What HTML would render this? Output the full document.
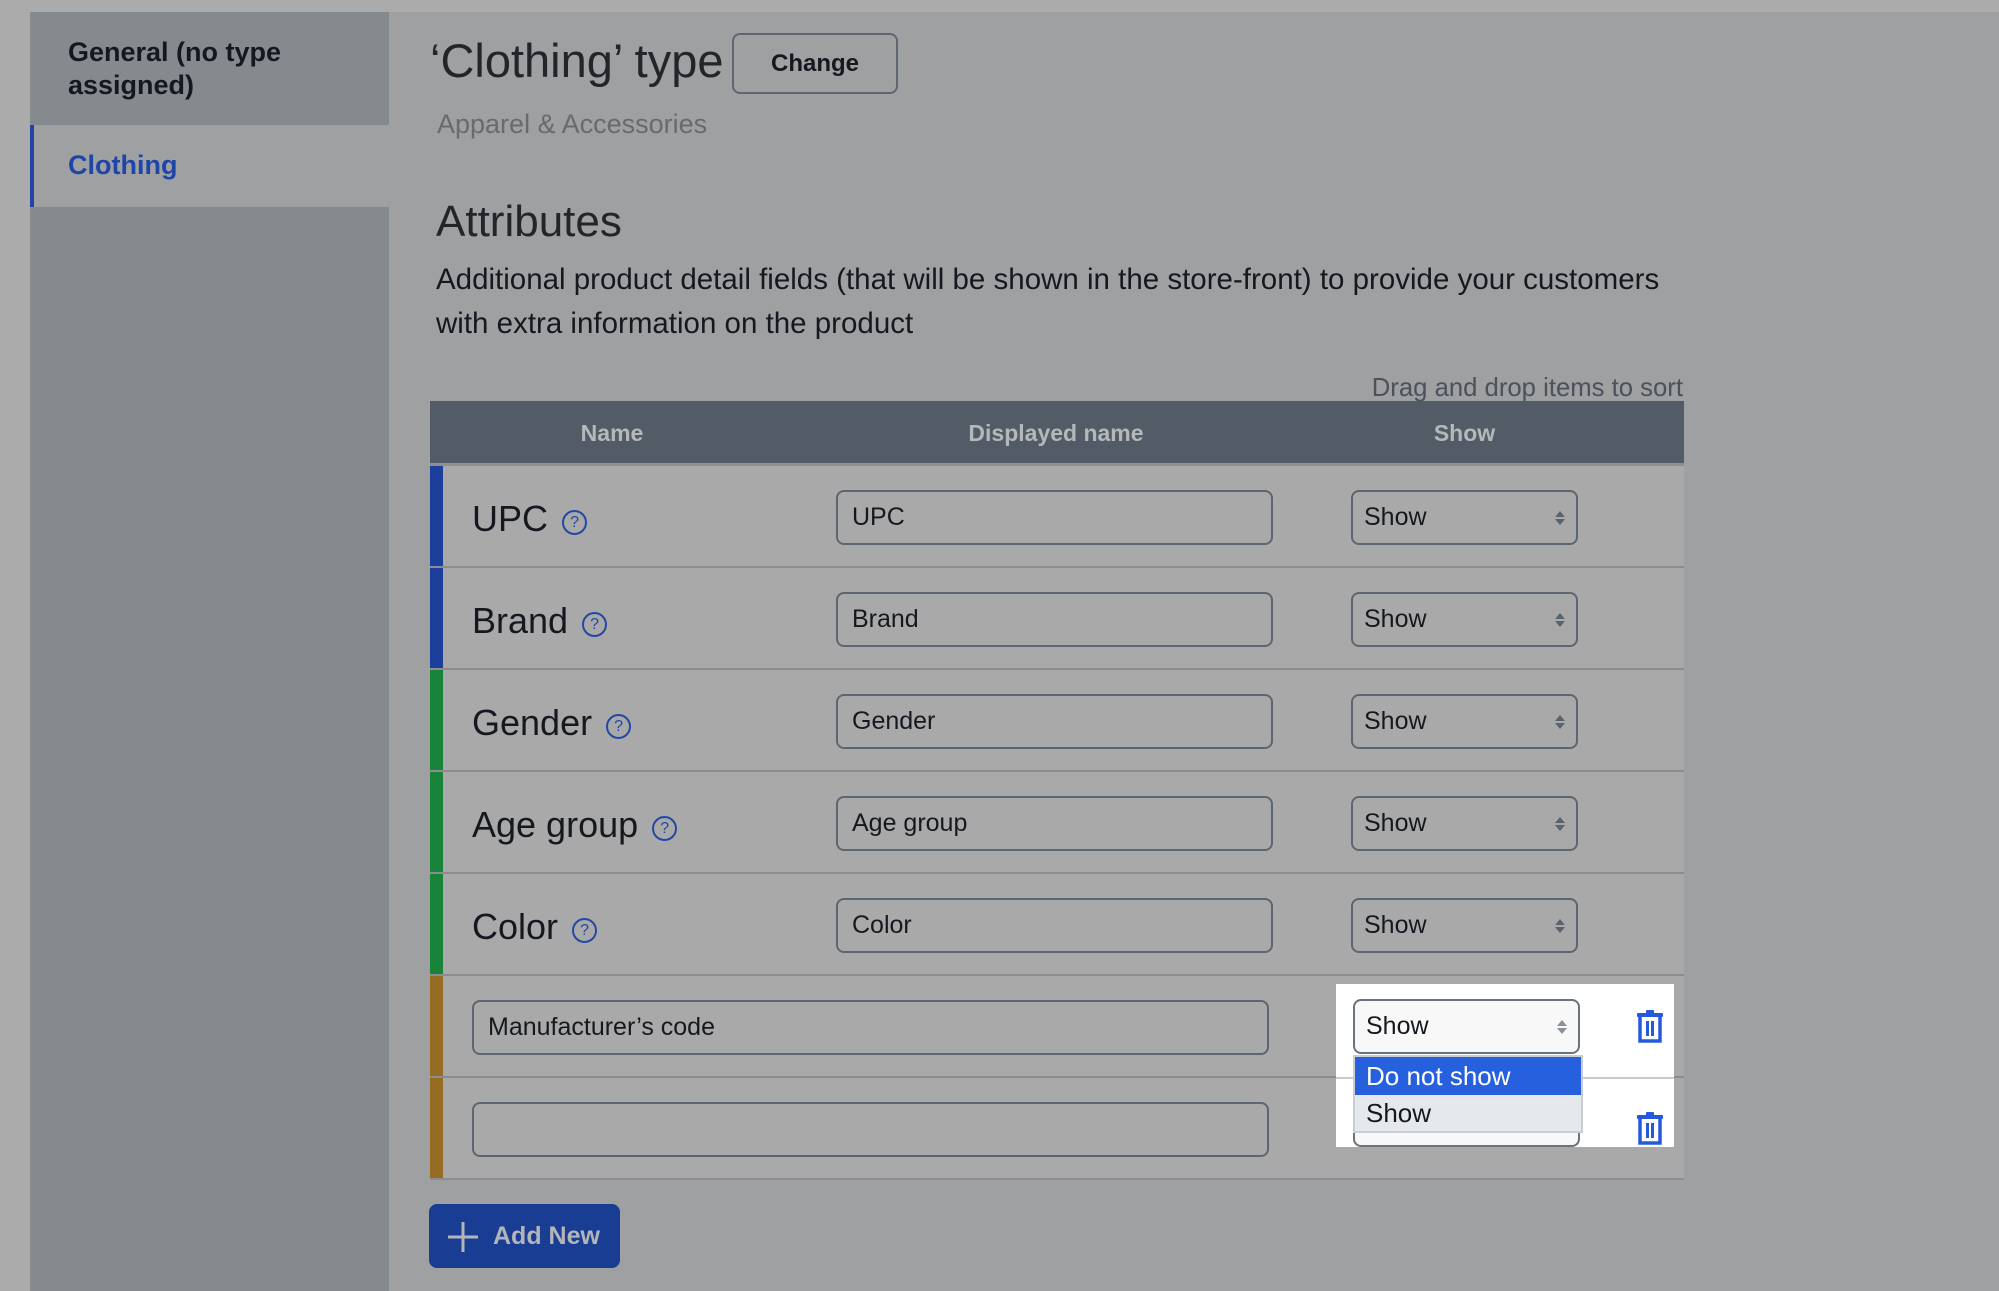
<!DOCTYPE html>
<html><head><meta charset="utf-8"><style>
*{box-sizing:border-box;margin:0;padding:0}
body{width:1999px;height:1291px;background:#ababab;font-family:"Liberation Sans",sans-serif;position:relative;overflow:hidden;color:#15191f}
.a{position:absolute}
.main{left:389px;top:12px;width:1610px;height:1279px;background:#9ea0a2}
.side{left:30px;top:12px;width:359px;height:1279px;background:#848a8d}
.row{position:absolute;left:430px;width:1254px;height:102px;background:#a9a9a9;border-bottom:2px solid #8a8e93}
.bar{position:absolute;left:0;top:0;width:13px;height:100px}
.nm{position:absolute;left:42px;top:32px;font-size:36px;color:#15191f;white-space:nowrap}
.hq{display:inline-block;width:25px;height:25px;border:2px solid #2148a8;border-radius:50%;color:#2148a8;font-size:16px;text-align:center;line-height:21px;vertical-align:4px;margin-left:14px}
.inp{position:absolute;top:24px;height:55px;border:2px solid #5d6670;border-radius:8px;font-size:25px;padding-left:14px;line-height:51px;color:#15191f}
.sel{position:absolute;left:921px;top:24px;width:227px;height:55px;border:2px solid #5d6670;border-radius:8px;font-size:25px;padding-left:11px;line-height:51px}
.arr{position:absolute;right:10px;top:18px;width:12px;height:16px}
</style></head><body>
<div class="a main"></div>
<div class="a side"></div>
<div class="a" style="left:30px;top:125px;width:359px;height:82px;background:#9fa0a2;border-left:4px solid #1f45a8"></div>
<div class="a" style="left:68px;top:36px;font-size:27px;font-weight:bold;line-height:33px;color:#15191f">General (no type<br>assigned)</div>
<div class="a" style="left:68px;top:150px;font-size:27px;font-weight:bold;color:#1f45a8">Clothing</div>

<div class="a" style="left:430px;top:33px;font-size:47px;color:#22262b">‘Clothing’ type</div>
<div class="a" style="left:732px;top:33px;width:166px;height:61px;border:2px solid #5d6670;border-radius:8px;font-size:24px;font-weight:bold;text-align:center;line-height:57px">Change</div>
<div class="a" style="left:437px;top:109px;font-size:27px;color:#676b70">Apparel &amp; Accessories</div>
<div class="a" style="left:436px;top:197px;font-size:44px;color:#22262b">Attributes</div>
<div class="a" style="left:436px;top:258px;font-size:29.5px;line-height:44px;color:#15191f;white-space:nowrap">Additional product detail fields (that will be shown in the store-front) to provide your customers<br>with extra information on the product</div>
<div class="a" style="left:1000px;width:683px;text-align:right;top:374px;font-size:25.7px;color:#4b525a">Drag and drop items to sort</div>

<div class="a" style="left:430px;top:401px;width:1254px;height:62px;background:#535c66;color:#b5b8bb;font-size:23px;font-weight:bold">
<div class="a" style="left:0;width:364px;text-align:center;top:19px">Name</div>
<div class="a" style="left:406px;width:440px;text-align:center;top:19px">Displayed name</div>
<div class="a" style="left:921px;width:227px;text-align:center;top:19px">Show</div>
</div>
<div class="a" style="left:430px;top:463px;width:1254px;height:3px;background:#8c9095"></div>

<div class="row" style="top:466px"><div class="bar" style="background:#1c3f9c"></div><div class="nm">UPC<span class="hq">?</span></div><div class="inp" style="left:406px;width:437px">UPC</div><div class="sel">Show<svg class="arr" viewBox="0 0 12 16"><path d="M6 1L11 7H1ZM6 15L11 9H1Z" fill="#5a636c"/></svg></div></div>
<div class="row" style="top:568px"><div class="bar" style="background:#1c3f9c"></div><div class="nm">Brand<span class="hq">?</span></div><div class="inp" style="left:406px;width:437px">Brand</div><div class="sel">Show<svg class="arr" viewBox="0 0 12 16"><path d="M6 1L11 7H1ZM6 15L11 9H1Z" fill="#5a636c"/></svg></div></div>
<div class="row" style="top:670px"><div class="bar" style="background:#17843a"></div><div class="nm">Gender<span class="hq">?</span></div><div class="inp" style="left:406px;width:437px">Gender</div><div class="sel">Show<svg class="arr" viewBox="0 0 12 16"><path d="M6 1L11 7H1ZM6 15L11 9H1Z" fill="#5a636c"/></svg></div></div>
<div class="row" style="top:772px"><div class="bar" style="background:#17843a"></div><div class="nm">Age group<span class="hq">?</span></div><div class="inp" style="left:406px;width:437px">Age group</div><div class="sel">Show<svg class="arr" viewBox="0 0 12 16"><path d="M6 1L11 7H1ZM6 15L11 9H1Z" fill="#5a636c"/></svg></div></div>
<div class="row" style="top:874px"><div class="bar" style="background:#17843a"></div><div class="nm">Color<span class="hq">?</span></div><div class="inp" style="left:406px;width:437px">Color</div><div class="sel">Show<svg class="arr" viewBox="0 0 12 16"><path d="M6 1L11 7H1ZM6 15L11 9H1Z" fill="#5a636c"/></svg></div></div>
<div class="row" style="top:976px"><div class="bar" style="background:#966c22"></div><div class="inp" style="left:42px;width:797px">Manufacturer’s code</div></div>
<div class="row" style="top:1078px"><div class="bar" style="background:#966c22"></div><div class="inp" style="left:42px;width:797px"></div></div>

<div class="a" style="left:1336px;top:984px;width:338px;height:163px;background:#fff"></div>
<div class="a" style="left:1336px;top:1077px;width:338px;height:2px;background:#c8cacc"></div>
<div class="a" style="left:1353px;top:999px;width:227px;height:55px;border:2px solid #6a737c;border-radius:8px;background:#f8f8f8;font-size:25px;padding-left:11px;line-height:51px">Show<svg class="arr" viewBox="0 0 12 16"><path d="M6 1L11 7H1ZM6 15L11 9H1Z" fill="#8a9097"/></svg></div>
<div class="a" style="left:1353px;top:1097px;width:227px;height:50px;border:2px solid #6a737c;border-top:none;border-radius:0 0 8px 8px;background:#f8f8f8"></div>
<div class="a" style="left:1353px;top:1055px;width:230px;height:78px;background:#e6e9ec;border:2px solid #c9ced3">
<div style="height:38px;background:#2660dd;color:#fff;font-size:26px;padding-left:11px;line-height:38px">Do not show</div>
<div style="font-size:26px;padding-left:11px;line-height:36px">Show</div>
</div>
<svg class="a" style="left:1636px;top:1010px" width="28" height="34" viewBox="0 0 28 34"><rect x="10" y="0" width="8" height="4" rx="1" fill="#2558dc"/><rect x="1" y="3" width="26" height="4" rx="1" fill="#2558dc"/><path d="M4 7V31H24V7" fill="none" stroke="#2558dc" stroke-width="3.5"/><rect x="10" y="11" width="3" height="15" fill="#2558dc"/><rect x="15" y="11" width="3" height="15" fill="#2558dc"/></svg>
<svg class="a" style="left:1636px;top:1112px" width="28" height="34" viewBox="0 0 28 34"><rect x="10" y="0" width="8" height="4" rx="1" fill="#2558dc"/><rect x="1" y="3" width="26" height="4" rx="1" fill="#2558dc"/><path d="M4 7V31H24V7" fill="none" stroke="#2558dc" stroke-width="3.5"/><rect x="10" y="11" width="3" height="15" fill="#2558dc"/><rect x="15" y="11" width="3" height="15" fill="#2558dc"/></svg>

<div class="a" style="left:429px;top:1204px;width:191px;height:64px;background:#1a3d94;border-radius:8px;color:#b3b5b8;font-size:25px;font-weight:bold;line-height:64px;padding-left:64px">Add New</div>
<svg class="a" style="left:447px;top:1221px" width="32" height="32"><path d="M16 1V31M1 16H31" stroke="#b3b5b8" stroke-width="3"/></svg>
</body></html>
